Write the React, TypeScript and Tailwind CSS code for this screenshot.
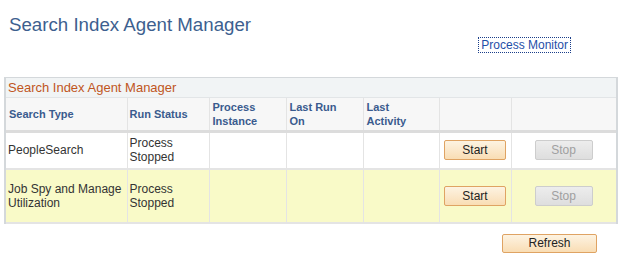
export default function App() {
  const rows = [
    { type: "PeopleSearch", status: ["Process", "Stopped"], h: "h-[38px]", bg: "bg-white" },
    { type: "Job Spy and Manage Utilization", status: ["Process", "Stopped"], h: "h-[54px]", bg: "bg-[#f9fac8]" },
  ];
  const cols = ["w-[121px]", "w-[82px]", "w-[77px]", "w-[77px]", "w-[76px]", "w-[72px]", "w-[105px]"];

  return (
    <div className="w-[635px] h-[267px] bg-white text-[#333] font-['Liberation_Sans',Arial,sans-serif]">
      <h1 className="pl-[9px] pt-[14px] text-[18.7px] leading-[22px] text-[#3d5f8f]">Search Index Agent Manager</h1>
      <div className="flex justify-end pr-[64px] mt-[1px]">
        <a className="border border-dotted border-[#1a3e8a] px-[2px] text-[12px] leading-[14px] text-[#1f4fa8]">Process Monitor</a>
      </div>

      <div className="ml-[4px] mt-[24px] w-[614px] border-x-2 border-t border-[#d4d8db]">
        <div className="h-[20px] bg-[#f1f4f5] border-b border-[#e2e5e7] pl-[2px] text-[13px] leading-[20px] text-[#c0561d]">
          Search Index Agent Manager
        </div>
        <table className="table-fixed border-collapse w-full text-[12px] leading-[14px]">
          <colgroup>
            {cols.map((c, i) => (
              <col key={i} className={c} />
            ))}
          </colgroup>
          <thead>
            <tr className="h-[33px] bg-[#f7f7f7] border-b-[3px] border-[#dcdcdc] text-[11px] font-bold text-[#3a5b8e] text-left align-middle">
              <th className="pl-[3px] font-bold">Search Type</th>
              <th className="pl-[2px] border-l border-[#e4e4e4] font-bold">Run Status</th>
              <th className="pl-[3px] border-l border-[#e4e4e4] font-bold">Process<br />Instance</th>
              <th className="pl-[3px] border-l border-[#e4e4e4] font-bold">Last Run<br />On</th>
              <th className="pl-[3px] border-l border-[#e4e4e4] font-bold">Last<br />Activity</th>
              <th className="border-l border-[#e4e4e4]"></th>
              <th className="border-l border-[#e4e4e4]"></th>
            </tr>
          </thead>
          <tbody>
            {rows.map((r, i) => (
              <tr key={i} className={`${r.h} ${r.bg} border-b-2 border-[#e4e4e4] align-middle`}>
                <td className="pl-[2px] pr-[2px]">{r.type}</td>
                <td className="pl-[2px] border-l border-[#e4e4e4]">
                  {r.status[0]}
                  <br />
                  {r.status[1]}
                </td>
                <td className="border-l border-[#e4e4e4]"></td>
                <td className="border-l border-[#e4e4e4]"></td>
                <td className="border-l border-[#e4e4e4]"></td>
                <td className="border-l border-[#e4e4e4] text-center">
                  <button className="w-[62px] h-[20px] rounded-[2px] border border-[#dfa363] bg-gradient-to-b from-[#fdf3e2] to-[#f9ddb4] text-[12px] text-[#222]">
                    Start
                  </button>
                </td>
                <td className="border-l border-[#e4e4e4] pl-[23px]">
                  <button className="w-[58px] h-[20px] rounded-[2px] border border-[#cdcdcd] bg-gradient-to-b from-[#ededed] to-[#dedede] text-[12px] text-[#a0a0a0]">
                    Stop
                  </button>
                </td>
              </tr>
            ))}
          </tbody>
        </table>
      </div>

      <div className="flex justify-end pr-[38px] mt-[10px]">
        <button className="w-[95px] h-[19px] rounded-[2px] border border-[#dfa363] bg-gradient-to-b from-[#fdf3e2] to-[#f9ddb4] text-[12px] leading-[17px] text-[#222]">
          Refresh
        </button>
      </div>
    </div>
  );
}
